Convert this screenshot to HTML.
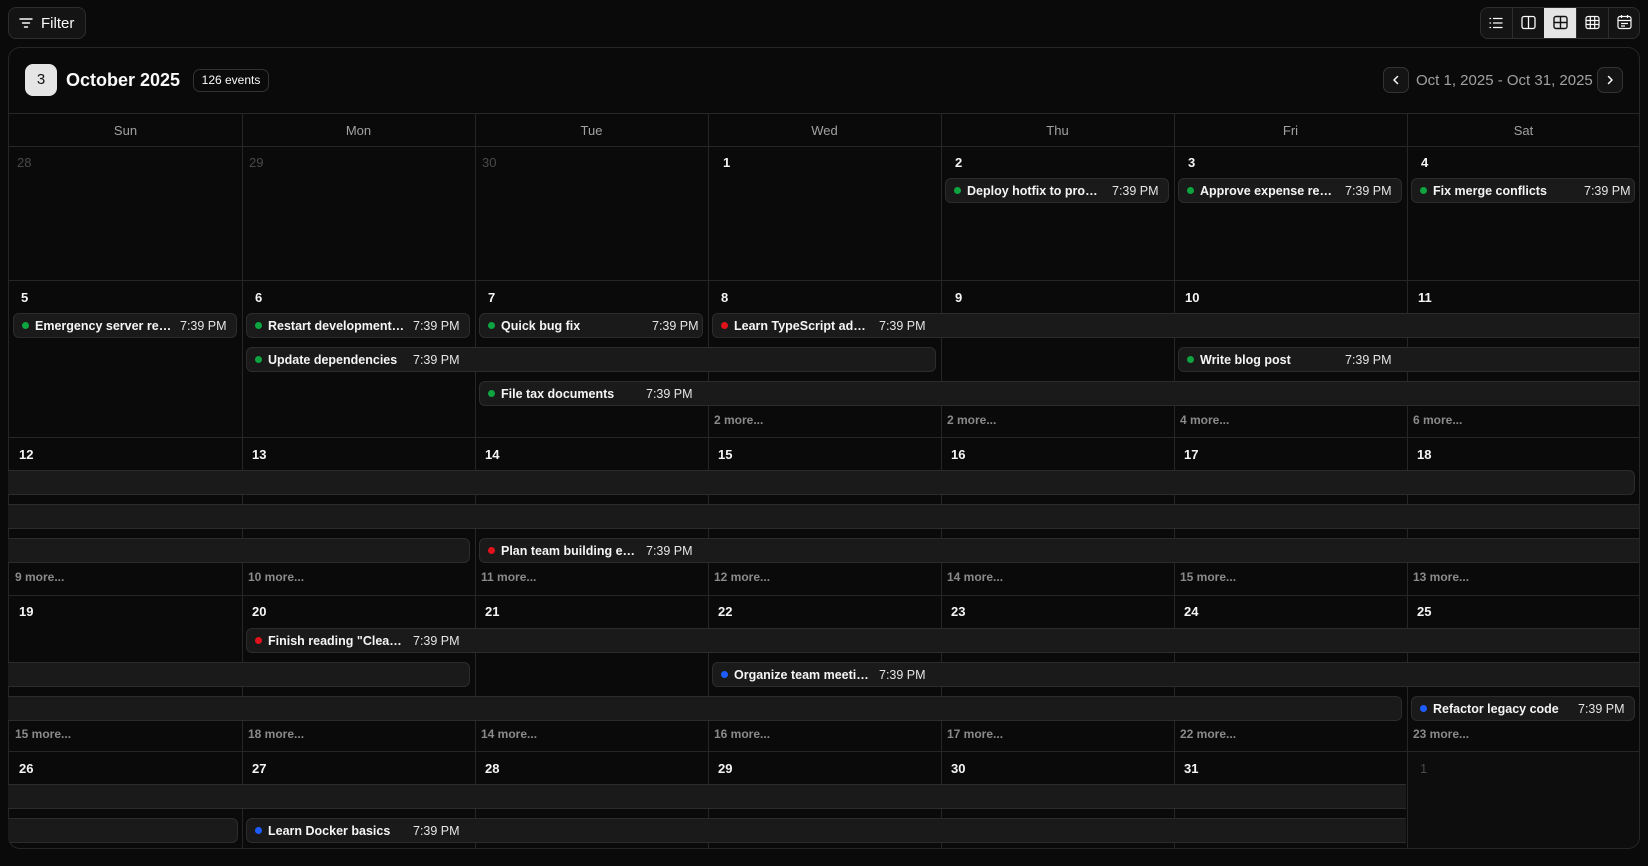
<!DOCTYPE html>
<html><head><meta charset="utf-8"><style>
*{box-sizing:border-box;margin:0;padding:0}
body{width:1648px;height:866px;background:#0a0a0a;font-family:"Liberation Sans",sans-serif;color:#fafafa;position:relative;overflow:hidden}
.abs{position:absolute}
.btn{position:absolute;border:1px solid #2e2e2e;border-radius:8px;background:#141414}
.cont{position:absolute;left:8px;top:47px;width:1632px;height:802px;border:1px solid #262626;border-radius:12px;overflow:hidden;background:#0a0a0a}
.hl{position:absolute;left:0;width:1632px;height:1px;background:#262626}
.vl{position:absolute;width:1px;background:#262626}
.dh{position:absolute;top:66px;width:233px;text-align:center;font-size:13px;color:#a1a1a1;line-height:34px}
.dn{position:absolute;font-size:13px;font-weight:700;color:#f5f5f5}
.dn.g{color:#4a4a4a;font-weight:400}
.ev{position:absolute;height:25px;background:#1a1a1a;border:1px solid #2c2c2c;border-radius:6px;display:flex;align-items:center;font-size:12.5px;white-space:nowrap;overflow:hidden}
.ev.ol{border-left:none;border-top-left-radius:0;border-bottom-left-radius:0}
.ev.or{border-right:none;border-top-right-radius:0;border-bottom-right-radius:0}
.dot{width:7px;height:7px;border-radius:50%;margin-left:8px;flex:none}
.gr{background:#0ea541}.rd{background:#e0121b}.bl{background:#1d5cff}
.t{width:137px;margin-left:6px;font-weight:700;color:#f5f5f5;overflow:hidden;text-overflow:ellipsis;flex:none}
.tm{margin-left:8px;color:#e5e5e5;flex:none}
.more{position:absolute;font-size:12px;font-weight:700;color:#8a8a8a}
.clip{position:absolute;left:0;top:0;width:1648px;height:866px;clip-path:inset(47px 9px 18px 8px round 12px)}
</style></head><body>
<div class="btn" style="left:8px;top:7px;width:78px;height:32px"></div>
<svg class="abs" style="left:19px;top:16px" width="14" height="14" viewBox="0 0 14 14" fill="none" stroke="#fafafa" stroke-width="1.4" stroke-linecap="round"><path d="M1 3h12M3.5 7h7M5.5 11h3"/></svg>
<div class="abs" style="left:41px;top:15px;font-size:15px;color:#fafafa">Filter</div>

<div class="btn" style="left:1480px;top:7px;width:160px;height:32px;overflow:hidden">
<div class="abs" style="left:63px;top:0;width:32px;height:32px;background:#e5e5e5"></div>
<div class="abs" style="left:31px;top:0;width:1px;height:32px;background:#2e2e2e"></div>
<div class="abs" style="left:95px;top:0;width:1px;height:32px;background:#2e2e2e"></div>
<div class="abs" style="left:127px;top:0;width:1px;height:32px;background:#2e2e2e"></div>
</div>
<svg class="abs" style="left:1489px;top:16px" width="14" height="14" viewBox="0 0 14 14" fill="none" stroke="#fafafa" stroke-width="1.3" stroke-linecap="round"><path d="M1 2.5h.5M1 7h.5M1 11.5h.5M4.5 2.5h8.5M4.5 7h8.5M4.5 11.5h8.5"/></svg>
<svg class="abs" style="left:1521px;top:15px" width="15" height="15" viewBox="0 0 15 15" fill="none" stroke="#fafafa" stroke-width="1.3"><rect x="1" y="1.5" width="13" height="12" rx="2"/><path d="M7.5 1.5v12"/></svg>
<svg class="abs" style="left:1553px;top:15px" width="15" height="15" viewBox="0 0 15 15" fill="none" stroke="#111" stroke-width="1.4"><rect x="1" y="1.5" width="13" height="12" rx="2"/><path d="M7.5 1.5v12M1 7.5h13"/></svg>
<svg class="abs" style="left:1585px;top:15px" width="15" height="15" viewBox="0 0 15 15" fill="none" stroke="#fafafa" stroke-width="1.2"><rect x="1" y="1.5" width="13" height="12" rx="2"/><path d="M5.3 1.5v12M9.7 1.5v12M1 5.5h13M1 9.5h13"/></svg>
<svg class="abs" style="left:1617px;top:14px" width="15" height="16" viewBox="0 0 15 16" fill="none" stroke="#fafafa" stroke-width="1.2"><rect x="1" y="2.5" width="13" height="12" rx="2"/><path d="M4.5 1v3M10.5 1v3M1 6.5h13M4 9.5h7M4 12h4"/></svg>

<div class="cont">
<div class="abs" style="left:16px;top:16px;width:32px;height:32px;border-radius:8px;background:#e5e5e5;color:#111;font-size:15px;text-align:center;line-height:32px">3</div>
<div class="abs" style="left:57px;top:22px;font-size:18px;font-weight:700">October 2025</div>
<div class="abs" style="left:184px;top:21px;width:76px;height:23px;border:1px solid #333;border-radius:7px;font-size:12px;text-align:center;line-height:21px">126 events</div>
<div class="abs" style="left:1374px;top:19px;width:26px;height:26px;border:1px solid #333;border-radius:7px;background:#141414"></div>
<svg class="abs" style="left:1381px;top:26px" width="12" height="12" viewBox="0 0 12 12" fill="none" stroke="#fafafa" stroke-width="1.5" stroke-linecap="round" stroke-linejoin="round"><path d="M7.5 2.5 4 6l3.5 3.5"/></svg>
<div class="abs" style="left:1407px;top:24px;font-size:15px;color:#a1a1a1">Oct 1, 2025 - Oct 31, 2025</div>
<div class="abs" style="left:1588px;top:19px;width:26px;height:26px;border:1px solid #333;border-radius:7px;background:#141414"></div>
<svg class="abs" style="left:1595px;top:26px" width="12" height="12" viewBox="0 0 12 12" fill="none" stroke="#fafafa" stroke-width="1.5" stroke-linecap="round" stroke-linejoin="round"><path d="M4.5 2.5 8 6l-3.5 3.5"/></svg>

<div class="hl" style="top:65px"></div>
<div class="dh" style="left:0">Sun</div><div class="dh" style="left:233px">Mon</div><div class="dh" style="left:466px">Tue</div><div class="dh" style="left:699px">Wed</div><div class="dh" style="left:932px">Thu</div><div class="dh" style="left:1165px">Fri</div><div class="dh" style="left:1398px">Sat</div>
<div class="hl" style="top:98px"></div><div class="hl" style="top:232px"></div><div class="hl" style="top:389px"></div><div class="hl" style="top:547px"></div><div class="hl" style="top:703px"></div>
<div class="vl" style="left:233px;top:65px;height:740px"></div><div class="vl" style="left:466px;top:65px;height:740px"></div><div class="vl" style="left:699px;top:65px;height:740px"></div><div class="vl" style="left:932px;top:65px;height:740px"></div><div class="vl" style="left:1165px;top:65px;height:740px"></div><div class="vl" style="left:1398px;top:65px;height:740px"></div>
<div class="abs" style="left:1399px;top:704px;width:240px;height:100px;background:#0d0d0d"></div>
</div>

<div class="clip">
<div class="dn g" style="left:17px;top:155px">28</div><div class="dn g" style="left:249px;top:155px">29</div><div class="dn g" style="left:482px;top:155px">30</div><div class="dn" style="left:723px;top:155px">1</div><div class="dn" style="left:955px;top:155px">2</div><div class="dn" style="left:1188px;top:155px">3</div><div class="dn" style="left:1421px;top:155px">4</div>
<div class="dn" style="left:21px;top:290px">5</div><div class="dn" style="left:255px;top:290px">6</div><div class="dn" style="left:488px;top:290px">7</div><div class="dn" style="left:721px;top:290px">8</div><div class="dn" style="left:955px;top:290px">9</div><div class="dn" style="left:1185px;top:290px">10</div><div class="dn" style="left:1418px;top:290px">11</div>
<div class="dn" style="left:19px;top:447px">12</div><div class="dn" style="left:252px;top:447px">13</div><div class="dn" style="left:485px;top:447px">14</div><div class="dn" style="left:718px;top:447px">15</div><div class="dn" style="left:951px;top:447px">16</div><div class="dn" style="left:1184px;top:447px">17</div><div class="dn" style="left:1417px;top:447px">18</div>
<div class="dn" style="left:19px;top:604px">19</div><div class="dn" style="left:252px;top:604px">20</div><div class="dn" style="left:485px;top:604px">21</div><div class="dn" style="left:718px;top:604px">22</div><div class="dn" style="left:951px;top:604px">23</div><div class="dn" style="left:1184px;top:604px">24</div><div class="dn" style="left:1417px;top:604px">25</div>
<div class="dn" style="left:19px;top:761px">26</div><div class="dn" style="left:252px;top:761px">27</div><div class="dn" style="left:485px;top:761px">28</div><div class="dn" style="left:718px;top:761px">29</div><div class="dn" style="left:951px;top:761px">30</div><div class="dn" style="left:1184px;top:761px">31</div><div class="dn g" style="left:1420px;top:761px">1</div>

<div class="ev" style="left:945px;top:178px;width:224px"><span class="dot gr"></span><span class="t">Deploy hotfix to production</span><span class="tm">7:39 PM</span></div>
<div class="ev" style="left:1178px;top:178px;width:224px"><span class="dot gr"></span><span class="t">Approve expense reports</span><span class="tm">7:39 PM</span></div>
<div class="ev" style="left:1411px;top:178px;width:224px"><span class="dot gr"></span><span class="t">Fix merge conflicts</span><span class="tm" style="margin-left:14px">7:39 PM</span></div>
<div class="ev" style="left:13px;top:313px;width:224px"><span class="dot gr"></span><span class="t">Emergency server restart</span><span class="tm">7:39 PM</span></div>
<div class="ev" style="left:246px;top:313px;width:224px"><span class="dot gr"></span><span class="t">Restart development server</span><span class="tm">7:39 PM</span></div>
<div class="ev" style="left:479px;top:313px;width:224px"><span class="dot gr"></span><span class="t">Quick bug fix</span><span class="tm" style="margin-left:14px">7:39 PM</span></div>
<div class="ev or" style="left:712px;top:313px;width:930px"><span class="dot rd"></span><span class="t">Learn TypeScript advanced</span><span class="tm">7:39 PM</span></div>
<div class="ev" style="left:246px;top:347px;width:690px"><span class="dot gr"></span><span class="t">Update dependencies</span><span class="tm">7:39 PM</span></div>
<div class="ev or" style="left:1178px;top:347px;width:465px"><span class="dot gr"></span><span class="t">Write blog post</span><span class="tm">7:39 PM</span></div>
<div class="ev or" style="left:479px;top:381px;width:1165px"><span class="dot gr"></span><span class="t">File tax documents</span><span class="tm">7:39 PM</span></div>
<div class="more" style="left:714px;top:413px">2 more...</div><div class="more" style="left:947px;top:413px">2 more...</div><div class="more" style="left:1180px;top:413px">4 more...</div><div class="more" style="left:1413px;top:413px">6 more...</div>
<div class="ev ol" style="left:8px;top:470px;width:1627px"></div>
<div class="ev ol or" style="left:8px;top:504px;width:1640px"></div>
<div class="ev ol" style="left:8px;top:538px;width:462px"></div>
<div class="ev or" style="left:479px;top:538px;width:1165px"><span class="dot rd"></span><span class="t">Plan team building event</span><span class="tm">7:39 PM</span></div>
<div class="more" style="left:15px;top:570px">9 more...</div><div class="more" style="left:248px;top:570px">10 more...</div><div class="more" style="left:481px;top:570px">11 more...</div><div class="more" style="left:714px;top:570px">12 more...</div><div class="more" style="left:947px;top:570px">14 more...</div><div class="more" style="left:1180px;top:570px">15 more...</div><div class="more" style="left:1413px;top:570px">13 more...</div>
<div class="ev or" style="left:246px;top:628px;width:1400px"><span class="dot rd"></span><span class="t">Finish reading "Clean Code"</span><span class="tm">7:39 PM</span></div>
<div class="ev ol" style="left:8px;top:662px;width:462px"></div>
<div class="ev or" style="left:712px;top:662px;width:930px"><span class="dot bl"></span><span class="t">Organize team meeting</span><span class="tm">7:39 PM</span></div>
<div class="ev ol" style="left:8px;top:696px;width:1394px"></div>
<div class="ev" style="left:1411px;top:696px;width:224px"><span class="dot bl"></span><span class="t">Refactor legacy code</span><span class="tm">7:39 PM</span></div>
<div class="more" style="left:15px;top:727px">15 more...</div><div class="more" style="left:248px;top:727px">18 more...</div><div class="more" style="left:481px;top:727px">14 more...</div><div class="more" style="left:714px;top:727px">16 more...</div><div class="more" style="left:947px;top:727px">17 more...</div><div class="more" style="left:1180px;top:727px">22 more...</div><div class="more" style="left:1413px;top:727px">23 more...</div>
<div class="ev ol or" style="left:8px;top:784px;width:1398px"></div>
<div class="ev ol" style="left:8px;top:818px;width:230px"></div>
<div class="ev or" style="left:246px;top:818px;width:1160px"><span class="dot bl"></span><span class="t">Learn Docker basics</span><span class="tm">7:39 PM</span></div>
</div>
</body></html>
